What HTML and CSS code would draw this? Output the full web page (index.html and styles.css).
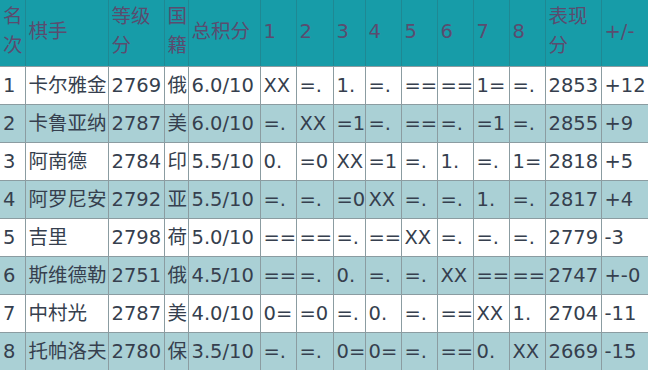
FILE: index.html
```html
<!DOCTYPE html>
<html lang="zh">
<head>
<meta charset="utf-8">
<title>排名</title>
<link rel="stylesheet" href="styles.css">
</head>
<body>
<table class="standings">
  <colgroup>
    <col class="c-rank"><col class="c-name"><col class="c-rating"><col class="c-fed"><col class="c-total">
    <col class="c-g1"><col class="c-g2"><col class="c-g3"><col class="c-g"><col class="c-g"><col class="c-g"><col class="c-g"><col class="c-g">
    <col class="c-perf"><col class="c-diff">
  </colgroup>
  <thead>
    <tr>
      <th>名次</th><th>棋手</th><th>等级分</th><th>国籍</th><th>总积分</th>
      <th>1</th><th>2</th><th>3</th><th>4</th><th>5</th><th>6</th><th>7</th><th>8</th>
      <th>表现分</th><th>+/-</th>
    </tr>
  </thead>
  <tbody>
    <tr><td>1</td><td>卡尔雅金</td><td>2769</td><td>俄</td><td>6.0/10</td><td>XX</td><td>=.</td><td>1.</td><td>=.</td><td>==</td><td>==</td><td>1=</td><td>=.</td><td>2853</td><td>+12</td></tr>
    <tr><td>2</td><td>卡鲁亚纳</td><td>2787</td><td>美</td><td>6.0/10</td><td>=.</td><td>XX</td><td>=1</td><td>=.</td><td>==</td><td>=.</td><td>=1</td><td>=.</td><td>2855</td><td>+9</td></tr>
    <tr><td>3</td><td>阿南德</td><td>2784</td><td>印</td><td>5.5/10</td><td>0.</td><td>=0</td><td>XX</td><td>=1</td><td>=.</td><td>1.</td><td>=.</td><td>1=</td><td>2818</td><td>+5</td></tr>
    <tr><td>4</td><td>阿罗尼安</td><td>2792</td><td>亚</td><td>5.5/10</td><td>=.</td><td>=.</td><td>=0</td><td>XX</td><td>=.</td><td>=.</td><td>1.</td><td>=.</td><td>2817</td><td>+4</td></tr>
    <tr><td>5</td><td>吉里</td><td>2798</td><td>荷</td><td>5.0/10</td><td>==</td><td>==</td><td>=.</td><td>==</td><td>XX</td><td>=.</td><td>=.</td><td>=.</td><td>2779</td><td>-3</td></tr>
    <tr><td>6</td><td>斯维德勒</td><td>2751</td><td>俄</td><td>4.5/10</td><td>==</td><td>=.</td><td>0.</td><td>=.</td><td>=.</td><td>XX</td><td>==</td><td>==</td><td>2747</td><td>+-0</td></tr>
    <tr><td>7</td><td>中村光</td><td>2787</td><td>美</td><td>4.0/10</td><td>0=</td><td>=0</td><td>=.</td><td>0.</td><td>=.</td><td>==</td><td>XX</td><td>1.</td><td>2704</td><td>-11</td></tr>
    <tr><td>8</td><td>托帕洛夫</td><td>2780</td><td>保</td><td>3.5/10</td><td>=.</td><td>=.</td><td>0=</td><td>0=</td><td>=.</td><td>==</td><td>0.</td><td>XX</td><td>2669</td><td>-15</td></tr>
  </tbody>
</table>
</body>
</html>
```
FILE: styles.css
```css
html, body {
  margin: 0;
  padding: 0;
  overflow: hidden;
  background: #ffffff;
}

.standings {
  border-collapse: collapse;
  table-layout: fixed;
  width: 648px;
  font-family: "DejaVu Sans", "Noto Sans CJK SC", sans-serif;
  font-size: 19.5px;
  color: #363f4e;
}

.c-rank { width: 25px; }
.c-name { width: 83px; }
.c-rating { width: 56px; }
.c-fed { width: 24px; }
.c-total { width: 72px; }
.c-g1 { width: 36px; }
.c-g2 { width: 37px; }
.c-g3 { width: 32px; }
.c-g { width: 36px; }
.c-perf { width: 56px; }
.c-diff { width: 47px; }

.standings th,
.standings td {
  border: 1px solid #8b9ca1;
  padding: 0 0 0 3px;
  text-align: left;
  vertical-align: middle;
  line-height: 29px;
  font-weight: normal;
  overflow: visible;
}

.standings th {
  background: #179ca8;
  color: #5a4c6f;
  border-top: none;
  border-color: #1f8893;
  border-bottom-color: #8b9ca1;
  padding-bottom: 3px;
}

.standings thead tr {
  height: 66px;
}

.standings tbody tr {
  height: 38px;
}

.standings td {
  white-space: nowrap;
}

.standings tbody tr:nth-child(even) td {
  background: #aad0d5;
}

.standings th:first-child,
.standings td:first-child {
  border-left: none;
}

.standings th:last-child,
.standings td:last-child {
  border-right: none;
}
```
